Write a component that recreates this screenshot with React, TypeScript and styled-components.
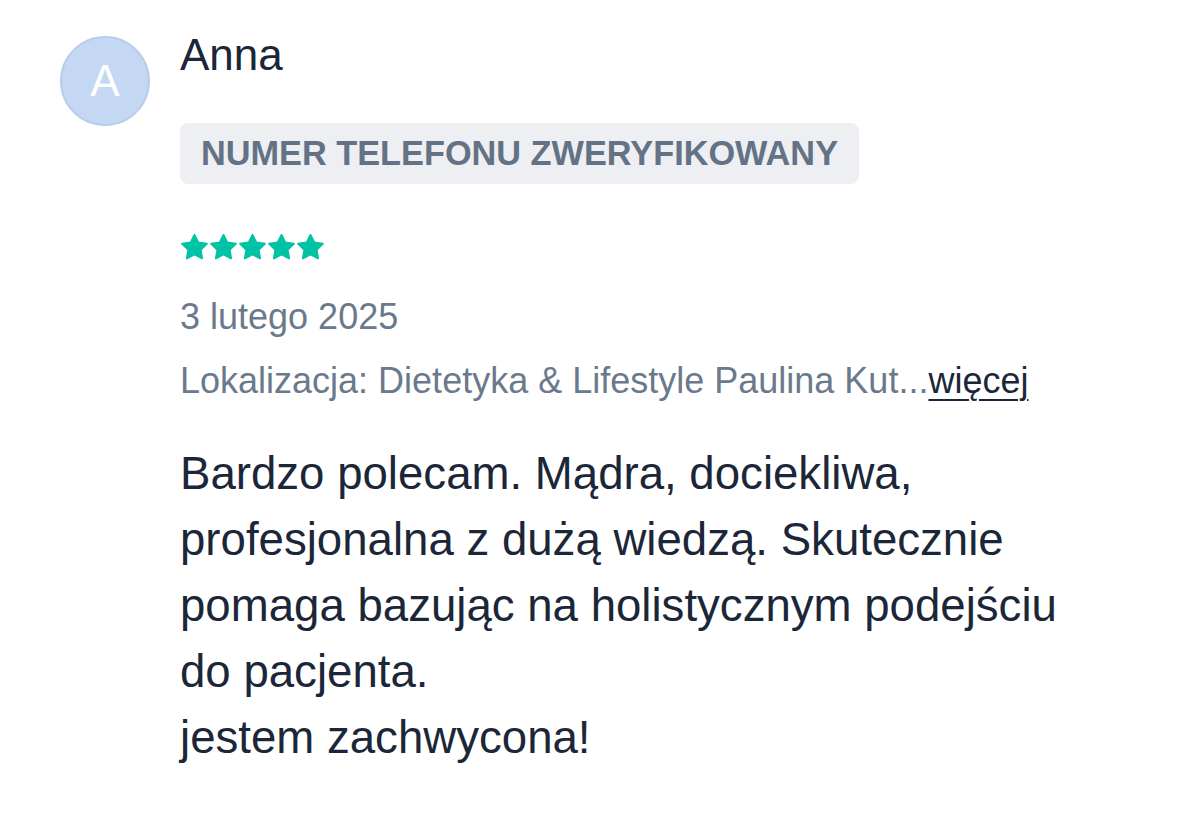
import React from "react";
import styled, { createGlobalStyle } from "styled-components";

const GlobalStyle = createGlobalStyle`
  html, body {
    margin: 0;
    padding: 0;
    background: #ffffff;
  }
  body {
    font-family: "Liberation Sans", Arial, Helvetica, sans-serif;
    -webkit-font-smoothing: antialiased;
  }
`;

const Review = styled.article`
  display: flex;
  align-items: flex-start;
  gap: 30px;
  padding: 36px 0 0 60px;
`;

const Avatar = styled.div`
  flex: 0 0 auto;
  width: 86px;
  height: 86px;
  border-radius: 50%;
  background: #c4d8f4;
  border: 2px solid #b8cdec;
  color: #ffffff;
  font-size: 44px;
  line-height: 86px;
  text-align: center;
`;

const Body = styled.div`
  display: flex;
  flex-direction: column;
  align-items: flex-start;
  width: 900px;
  margin-top: -7px;
`;

const Name = styled.div`
  font-size: 44px;
  line-height: 52px;
  color: #1b2738;
`;

const Badge = styled.span`
  margin-top: 42px;
  padding: 10px 21px 11px;
  border-radius: 8px;
  background: #edeff3;
  color: #637385;
  font-size: 34.3px;
  line-height: 40px;
  font-weight: 700;
  text-transform: uppercase;
`;

const Stars = styled.div`
  display: flex;
  gap: 0;
  margin-top: 49px;
`;

const Meta = styled.div<{ $gap: number }>`
  margin-top: ${(p) => p.$gap}px;
  font-size: 36px;
  line-height: 44px;
  color: #6a7a8c;
`;

const More = styled.a`
  color: #1b2738;
  text-decoration: underline;
  text-underline-offset: 6px;
  text-decoration-thickness: 1.5px;
`;

const Text = styled.p`
  margin: 38px 0 0;
  font-size: 45.6px;
  line-height: 66px;
  color: #1b2738;
  white-space: pre-line;
`;

const Star = () => (
  <svg width="29" height="29" viewBox="0 0 24 24">
    <polygon
      points="12,1.6 15.1,7.9 22.2,8.9 17.1,13.9 18.3,21 12,17.7 5.7,21 6.9,13.9 1.8,8.9 8.9,7.9"
      fill="#00c3a5"
      stroke="#00c3a5"
      strokeWidth="1.6"
      strokeLinejoin="round"
    />
  </svg>
);

export default function App() {
  return (
    <>
      <GlobalStyle />
      <Review>
        <Avatar>A</Avatar>
        <Body>
          <Name>Anna</Name>
          <Badge>Numer telefonu zweryfikowany</Badge>
          <Stars>
            {[0, 1, 2, 3, 4].map((i) => (
              <Star key={i} />
            ))}
          </Stars>
          <Meta $gap={33}>3 lutego 2025</Meta>
          <Meta $gap={20}>
            Lokalizacja: Dietetyka &amp; Lifestyle Paulina Kut...
            <More href="#">więcej</More>
          </Meta>
          <Text>
            {
              "Bardzo polecam. Mądra, dociekliwa, profesjonalna z dużą wiedzą. Skutecznie pomaga bazując na holistycznym podejściu do pacjenta.\njestem zachwycona!"
            }
          </Text>
        </Body>
      </Review>
    </>
  );
}
